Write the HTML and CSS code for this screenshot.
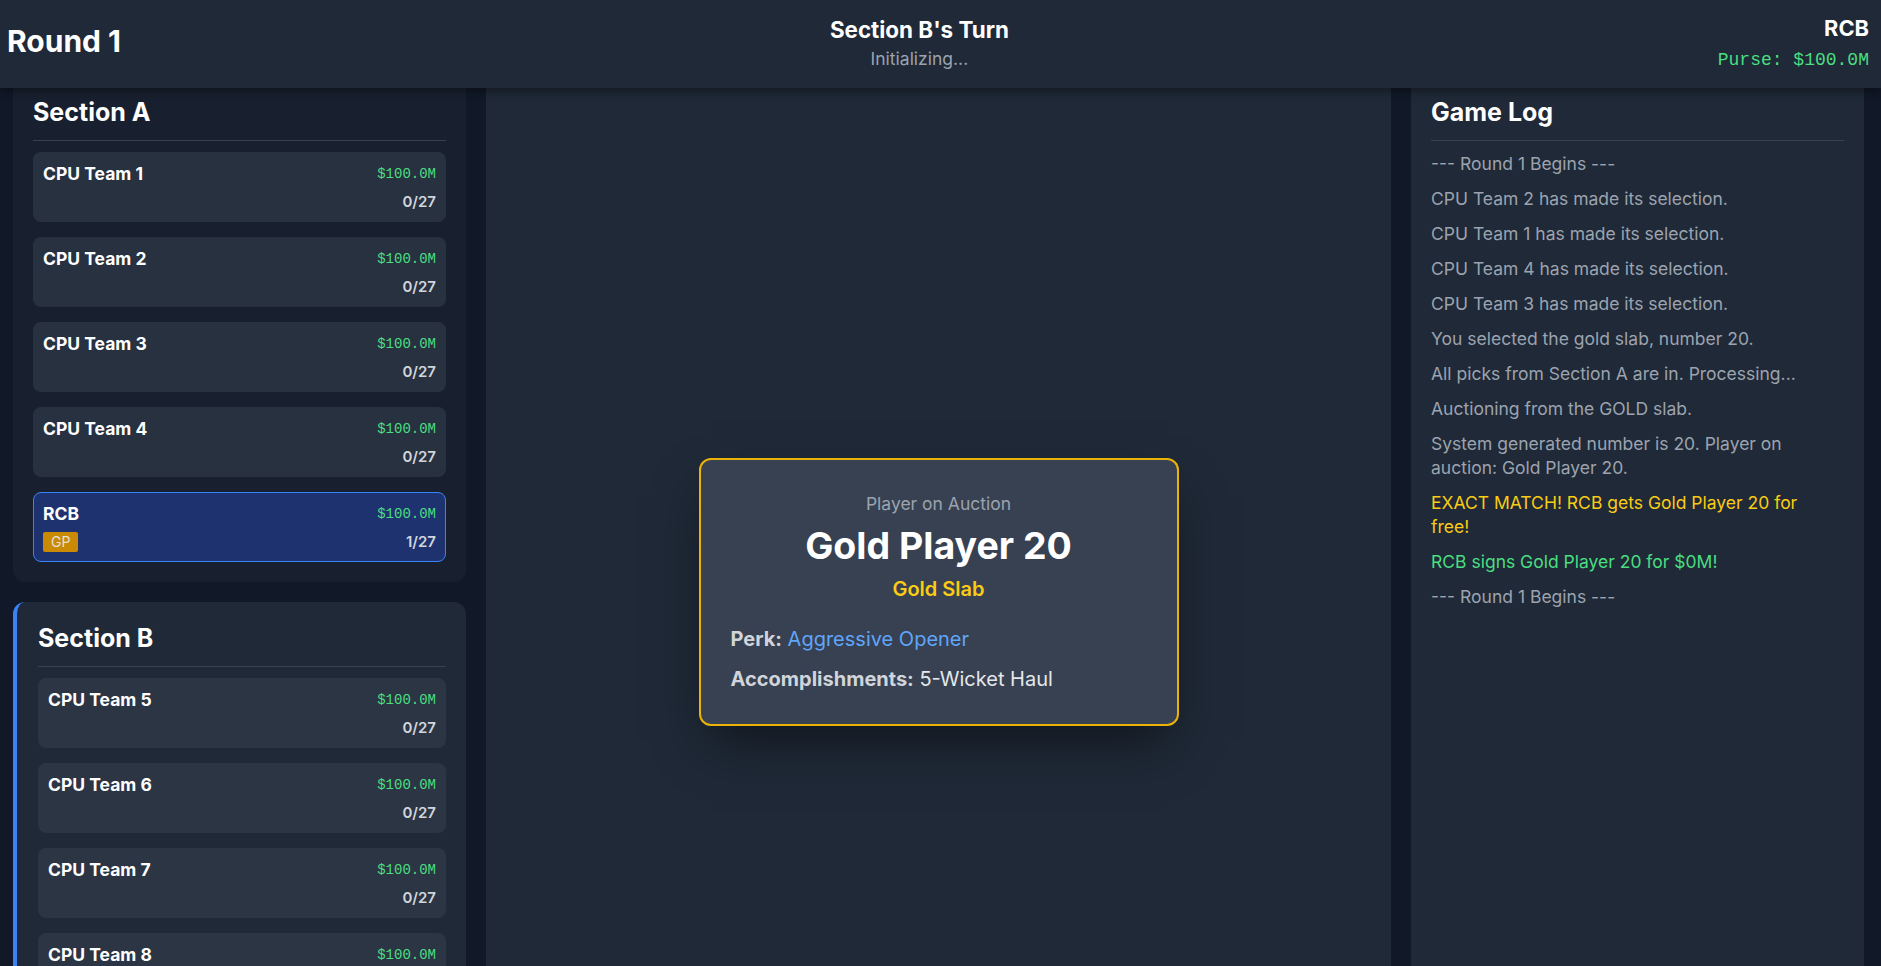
FILE: index.html
```html
<!DOCTYPE html>
<html lang="en">
<head>
<meta charset="utf-8">
<title>Auction - Round 1</title>
<link rel="stylesheet" href="styles.css">
</head>
<body>
<div class="app">
  <header class="topbar">
    <div class="round">Round 1</div>
    <div class="turn">
      <div class="turn-title">Section B's Turn</div>
      <div class="turn-status">Initializing...</div>
    </div>
    <div class="me">
      <div class="me-name">RCB</div>
      <div class="me-purse">Purse: $100.0M</div>
    </div>
  </header>

  <main class="layout">
    <aside class="sidebar sidebar-left">
      <section class="panel panel-dim panel-cut">
        <h2 class="panel-title">Section A</h2>
        <div class="team-list">
          <div class="team-card">
            <div class="team-row"><span class="team-name">CPU Team 1</span><span class="team-money">$100.0M</span></div>
            <div class="team-row team-row-sub"><span class="team-badges"></span><span class="team-count">0/27</span></div>
          </div>
          <div class="team-card">
            <div class="team-row"><span class="team-name">CPU Team 2</span><span class="team-money">$100.0M</span></div>
            <div class="team-row team-row-sub"><span class="team-badges"></span><span class="team-count">0/27</span></div>
          </div>
          <div class="team-card">
            <div class="team-row"><span class="team-name">CPU Team 3</span><span class="team-money">$100.0M</span></div>
            <div class="team-row team-row-sub"><span class="team-badges"></span><span class="team-count">0/27</span></div>
          </div>
          <div class="team-card">
            <div class="team-row"><span class="team-name">CPU Team 4</span><span class="team-money">$100.0M</span></div>
            <div class="team-row team-row-sub"><span class="team-badges"></span><span class="team-count">0/27</span></div>
          </div>
          <div class="team-card team-card-me">
            <div class="team-row"><span class="team-name">RCB</span><span class="team-money">$100.0M</span></div>
            <div class="team-row team-row-sub"><span class="team-badges"><span class="badge badge-gold">GP</span></span><span class="team-count">1/27</span></div>
          </div>
        </div>
      </section>

      <section class="panel panel-active">
        <h2 class="panel-title">Section B</h2>
        <div class="team-list">
          <div class="team-card">
            <div class="team-row"><span class="team-name">CPU Team 5</span><span class="team-money">$100.0M</span></div>
            <div class="team-row team-row-sub"><span class="team-badges"></span><span class="team-count">0/27</span></div>
          </div>
          <div class="team-card">
            <div class="team-row"><span class="team-name">CPU Team 6</span><span class="team-money">$100.0M</span></div>
            <div class="team-row team-row-sub"><span class="team-badges"></span><span class="team-count">0/27</span></div>
          </div>
          <div class="team-card">
            <div class="team-row"><span class="team-name">CPU Team 7</span><span class="team-money">$100.0M</span></div>
            <div class="team-row team-row-sub"><span class="team-badges"></span><span class="team-count">0/27</span></div>
          </div>
          <div class="team-card">
            <div class="team-row"><span class="team-name">CPU Team 8</span><span class="team-money">$100.0M</span></div>
            <div class="team-row team-row-sub"><span class="team-badges"></span><span class="team-count">0/27</span></div>
          </div>
        </div>
      </section>
    </aside>

    <section class="stage">
      <div class="player-card">
        <div class="player-label">Player on Auction</div>
        <div class="player-name">Gold Player 20</div>
        <div class="player-slab">Gold Slab</div>
        <div class="player-details">
          <p class="player-line"><span class="player-key">Perk:</span> <span class="player-perk">Aggressive Opener</span></p>
          <p class="player-line"><span class="player-key">Accomplishments:</span> <span class="player-val">5-Wicket Haul</span></p>
        </div>
      </div>
    </section>

    <aside class="sidebar sidebar-right">
      <section class="panel panel-log panel-cut">
        <h2 class="panel-title">Game Log</h2>
        <ul class="log">
          <li class="log-item">--- Round 1 Begins ---</li>
          <li class="log-item">CPU Team 2 has made its selection.</li>
          <li class="log-item">CPU Team 1 has made its selection.</li>
          <li class="log-item">CPU Team 4 has made its selection.</li>
          <li class="log-item">CPU Team 3 has made its selection.</li>
          <li class="log-item">You selected the gold slab, number 20.</li>
          <li class="log-item">All picks from Section A are in. Processing...</li>
          <li class="log-item">Auctioning from the GOLD slab.</li>
          <li class="log-item">System generated number is 20. Player on auction: Gold Player 20.</li>
          <li class="log-item log-gold">EXACT MATCH! RCB gets Gold Player 20 for free!</li>
          <li class="log-item log-green">RCB signs Gold Player 20 for $0M!</li>
          <li class="log-item">--- Round 1 Begins ---</li>
        </ul>
      </section>
    </aside>
  </main>
</div>
</body>
</html>
```

FILE: styles.css
```css
* {
  box-sizing: border-box;
}

html, body {
  margin: 0;
  padding: 0;
  height: 100%;
}

body {
  background: #111827;
  color: #f3f4f6;
  font-family: Inter, "Noto Sans", "Liberation Sans", sans-serif;
  font-size: 16px;
  line-height: 1.5;
  overflow: hidden;
}

.app {
  display: flex;
  flex-direction: column;
  height: 100vh;
}

/* ---------- top bar ---------- */
.topbar {
  position: relative;
  z-index: 10;
  flex: 0 0 88px;
  display: flex;
  align-items: center;
  justify-content: space-between;
  padding: 0 12px 6px 7px;
  background: #1f2937;
  box-shadow: 0 4px 8px rgba(0, 0, 0, 0.35);
}

.round {
  font-size: 30px;
  line-height: 36px;
  font-weight: 700;
  color: #ffffff;
}

.turn {
  margin-top: 5px;
  text-align: center;
}

.turn-title {
  font-size: 22.4px;
  line-height: 28px;
  font-weight: 700;
  color: #ffffff;
}

.turn-status {
  margin-top: 3px;
  font-size: 17.5px;
  line-height: 24px;
  color: #9ca3af;
}

.me {
  margin-top: 4px;
  text-align: right;
}

.me-name {
  font-size: 21.8px;
  line-height: 30px;
  font-weight: 700;
  color: #ffffff;
}

.me-purse {
  margin-top: 3px;
  font-family: "Liberation Mono", "DejaVu Sans Mono", monospace;
  font-size: 18px;
  line-height: 28px;
  color: #4ade80;
}

/* ---------- layout ---------- */
.layout {
  flex: 1 1 auto;
  display: flex;
  min-height: 0;
}

.sidebar {
  display: flex;
  flex-direction: column;
  gap: 20px;
  overflow: hidden;
}

.sidebar-left {
  flex: 0 0 486px;
  padding: 0 20px 0 13px;
}

.sidebar-right {
  flex: 0 0 490px;
  padding: 0 17px 0 20px;
}

.stage {
  flex: 1 1 auto;
  display: flex;
  flex-direction: column;
  align-items: center;
  justify-content: center;
  padding-top: 130px;
  background: #1f2937;
}

/* ---------- panels ---------- */
.panel {
  flex: 0 0 auto;
  padding: 20px;
  border-radius: 12px;
  background: #1f2937;
}

.panel-cut {
  padding-top: 8px;
  border-top-left-radius: 0;
  border-top-right-radius: 0;
}

.panel-dim {
  background: #18202f;
}

.panel-active {
  padding-left: 21px;
  border-left: 4px solid #3b82f6;
}

.panel-log {
  flex: 1 1 auto;
  border-bottom-left-radius: 0;
  border-bottom-right-radius: 0;
}

.panel-title {
  margin: 0 0 11px;
  padding-bottom: 12px;
  border-bottom: 1px solid #374151;
  font-size: 25px;
  line-height: 32px;
  font-weight: 700;
  color: #ffffff;
}

/* ---------- team cards ---------- */
.team-list {
  display: flex;
  flex-direction: column;
  gap: 15px;
}

.team-card {
  padding: 10px;
  border-radius: 8px;
  background: rgba(55, 65, 81, 0.5);
}

.team-card-me {
  padding: 9px;
  border: 1px solid #3b82f6;
  background: #1e3270;
}

.team-row {
  display: flex;
  align-items: center;
  justify-content: space-between;
  height: 24px;
}

.team-row-sub {
  margin-top: 6px;
  height: 20px;
}

.team-name {
  font-size: 17.5px;
  font-weight: 700;
  color: #ffffff;
}

.team-money {
  font-family: "Liberation Mono", "DejaVu Sans Mono", monospace;
  font-size: 14px;
  color: #4ade80;
}

.team-count {
  font-size: 15px;
  line-height: 20px;
  font-weight: 600;
  color: #d1d5db;
}

.team-badges {
  display: flex;
  gap: 4px;
}

.badge {
  display: inline-block;
  padding: 0 8px;
  border-radius: 2px;
  font-size: 14px;
  line-height: 20px;
}

.badge-gold {
  background: #ca8a04;
  color: #e5e1d8;
}

/* ---------- player card ---------- */
.player-card {
  width: 480px;
  padding: 32px 30px 31px;
  border: 2px solid #eab308;
  border-radius: 12px;
  background: #374151;
  box-shadow: 0 25px 50px -12px rgba(0, 0, 0, 0.5);
  text-align: center;
}

.player-label {
  font-size: 17.5px;
  line-height: 24px;
  color: #9ca3af;
}

.player-name {
  margin-top: 10px;
  font-size: 37.5px;
  line-height: 40px;
  font-weight: 700;
  color: #ffffff;
}

.player-slab {
  margin-top: 9px;
  font-size: 20px;
  line-height: 28px;
  font-weight: 600;
  color: #facc15;
}

.player-details {
  margin-top: 22px;
  text-align: left;
  display: flex;
  flex-direction: column;
  gap: 12px;
}

.player-line {
  margin: 0;
  font-size: 20px;
  line-height: 28px;
  color: #d1d5db;
}

.player-key {
  font-weight: 700;
  color: #d1d5db;
}

.player-perk {
  color: #60a5fa;
}

.player-val {
  color: #e5e7eb;
}

/* ---------- log ---------- */
.log {
  list-style: none;
  margin: 0;
  padding: 0 10px 0 0;
  display: flex;
  flex-direction: column;
  gap: 11px;
}

.log-item {
  font-size: 17.5px;
  line-height: 24px;
  color: #9ca3af;
}

.log-gold {
  color: #facc15;
}

.log-green {
  color: #4ade80;
}
```
